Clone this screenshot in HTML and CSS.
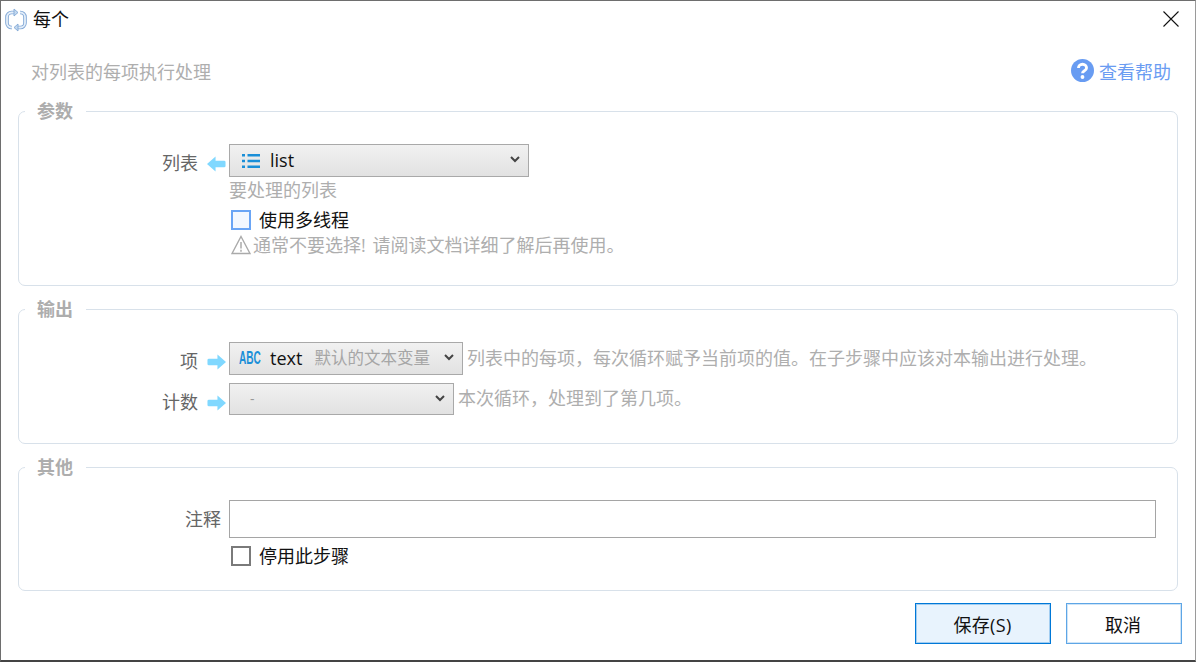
FILE: index.html
```html
<!DOCTYPE html>
<html lang="zh-CN">
<head>
<meta charset="utf-8">
<title>每个</title>
<link rel="stylesheet" href="styles.css">
</head>
<body>
<div class="window">
  <header class="titlebar">
    <svg class="loop-icon" width="24" height="24" viewBox="0 0 24 24" fill="none">
      <path d="M10 4.500H7.500a4.500 4.500 0 0 0-4.500 4.500v6a4.500 4.500 0 0 0 4.500 4.500H8" stroke="#82a8d6" stroke-width="3.600"/>
      <path d="M14 19.500h2.500a4.500 4.500 0 0 0 4.500-4.500V9a4.500 4.500 0 0 0-4.500-4.500H16" stroke="#82a8d6" stroke-width="3.600"/>
      <path d="M10 4.500H7.500a4.500 4.500 0 0 0-4.500 4.500v6a4.500 4.500 0 0 0 4.500 4.500H8" stroke="#e4eef9" stroke-width="1.800"/>
      <path d="M14 19.500h2.500a4.500 4.500 0 0 0 4.500-4.500V9a4.500 4.500 0 0 0-4.500-4.500H16" stroke="#e4eef9" stroke-width="1.800"/>
      <path d="M10 1 14 4.500 10 8Z M14 16 10 19.500 14 23Z" fill="#c4d9ef" stroke="#82a8d6" stroke-width=".9"/>
    </svg>
    <span class="title">每个</span>
    <svg class="close" width="16" height="16" viewBox="0 0 16 16"><path d="M.5.5l15 15M15.500.5l-15 15" stroke="#111" stroke-width="1.100" fill="none"/></svg>
  </header>

  <div class="intro">
    <span class="muted">对列表的每项执行处理</span>
    <a class="help">
      <svg width="23" height="23" viewBox="0 0 24 24"><circle cx="12" cy="12" r="12" fill="#689cf2"/><path d="M7.800 9.500a4.200 4 0 0 1 8.400 0c0 2.800-4.200 2.700-4.200 5.300" fill="none" stroke="#fff" stroke-width="3"/><circle cx="12" cy="18.800" r="2" fill="#fff"/></svg>
      <span>查看帮助</span>
    </a>
  </div>

  <fieldset class="group group-params">
    <legend>参数</legend>
    <div class="row row-list">
      <span class="label">列表</span>
      <svg class="arrow" viewBox="0 0 20 16"><path d="M0 8 9 0v4.500h9a1.500 1.500 0 0 1 1.500 1.500v4a1.500 1.500 0 0 1-1.500 1.500H9V16Z" fill="#80d8ff"/></svg>
      <div class="select select-list">
        <svg class="list-icon" width="18" height="14" viewBox="0 0 18 14"><path d="M0 0h3v2.500H0zM5.500 0H18v2.500H5.500zM0 5.700h3v2.500H0zM5.500 5.700H18v2.500H5.500zM0 11.400h3v2.500H0zM5.500 11.400H18v2.500H5.500z" fill="#1b8fd8"/></svg>
        <span class="value">list</span>
        <svg class="chev" width="10" height="7" viewBox="0 0 10 7"><path d="M1 1l4 4 4-4" fill="none" stroke="#444" stroke-width="2"/></svg>
      </div>
    </div>
    <div class="under muted hint-list">要处理的列表</div>
    <label class="under check-row check-thread"><span class="check check-blue"></span>使用多线程</label>
    <div class="under warn muted">
      <svg width="20" height="20" viewBox="0 0 20 20"><path d="M10 1.500 19 18.500H1Z" fill="none" stroke="#aaa" stroke-width="1.400"/><path d="M10 7v6.500M10 14.800v2" stroke="#aaa" stroke-width="1.500"/></svg>
      <span>通常不要选择! 请阅读文档详细了解后再使用。</span>
    </div>
  </fieldset>

  <fieldset class="group group-output">
    <legend>输出</legend>
    <div class="row row-item">
      <span class="label">项</span>
      <svg class="arrow" viewBox="0 0 20 16"><path d="M20 8 11 0v4.500H2A1.500 1.500 0 0 0 .5 6v4A1.500 1.500 0 0 0 2 11.500h9V16Z" fill="#80d8ff"/></svg>
      <div class="select select-text">
        <span class="abc">ABC</span>
        <span class="value">text</span>
        <span class="sub">默认的文本变量</span>
        <svg class="chev" width="10" height="7" viewBox="0 0 10 7"><path d="M1 1l4 4 4-4" fill="none" stroke="#444" stroke-width="2"/></svg>
      </div>
      <span class="muted side">列表中的每项，每次循环赋予当前项的值。在子步骤中应该对本输出进行处理。</span>
    </div>
    <div class="row row-count">
      <span class="label">计数</span>
      <svg class="arrow" viewBox="0 0 20 16"><path d="M20 8 11 0v4.500H2A1.500 1.500 0 0 0 .5 6v4A1.500 1.500 0 0 0 2 11.500h9V16Z" fill="#80d8ff"/></svg>
      <div class="select select-count">
        <span class="dash">-</span>
        <svg class="chev" width="10" height="7" viewBox="0 0 10 7"><path d="M1 1l4 4 4-4" fill="none" stroke="#444" stroke-width="2"/></svg>
      </div>
      <span class="muted side">本次循环，处理到了第几项。</span>
    </div>
  </fieldset>

  <fieldset class="group group-other">
    <legend>其他</legend>
    <div class="row">
      <span class="label label-wide">注释</span>
      <input class="note" type="text">
    </div>
    <label class="under check-row check-disable"><span class="check"></span>停用此步骤</label>
  </fieldset>

  <footer class="actions">
    <button class="btn btn-primary">保存(S)</button>
    <button class="btn btn-cancel">取消</button>
  </footer>
</div>
</body>
</html>
```

FILE: styles.css
```css
* { box-sizing: border-box; }
html, body { margin: 0; padding: 0; }
body {
  width: 1196px;
  height: 662px;
  overflow: hidden;
  background: #fff;
  font-family: "Open Sans", "Noto Sans CJK SC", sans-serif;
  font-size: 18px;
  color: #111;
}
.window {
  width: 1196px;
  height: 662px;
  border: 1px solid #6e6e6e;
  border-right-color: #9a9a9a;
  border-bottom: 2px solid #444;
  background: #fff;
}
.muted { color: #aeaeae; }

.titlebar {
  display: flex;
  align-items: center;
  height: 37px;
  padding: 0 17px 0 3px;
  line-height: 24px;
}
.loop-icon { flex: none; margin-right: 5px; }
.title { color: #111; margin-top: -2px; }
.close { margin-left: auto; margin-top: -1px; margin-right: -1px; }

.intro {
  display: flex;
  align-items: center;
  justify-content: space-between;
  height: 62px;
  padding: 3px 24px 0 30px;
}
.help {
  display: flex;
  align-items: center;
  gap: 5px;
  color: #6a9cf2;
}

.group {
  margin: 0 17px 12px;
  padding: 22px 0 0;
  min-width: 0;
  border: 1px solid #d8e1ea;
  border-radius: 7px;
}
.group-params { height: 186px; }
.group-output { height: 146px; }
.group-other { height: 135px; }
.group legend {
  margin-left: 6px;
  padding: 0 13px 0 12px;
  font-weight: 700;
  line-height: 22px;
  font-size: 18px;
  color: #adadad;
}

.row {
  display: grid;
  grid-template-columns: 179px 31px max-content 1fr;
  align-items: center;
}
.label {
  text-align: right;
  color: #666;
  line-height: 33px;
}
.label-wide {
  grid-column: 1 / 3;
  padding-right: 8px;
}
.arrow {
  justify-self: end;
  width: 19px;
  height: 16px;
  margin-right: 3px;
}
.row-list .label, .row-list .arrow { position: relative; top: 3px; }
.row-item .label, .row-item .arrow { position: relative; top: 3px; }
.row-count .label, .row-count .arrow { position: relative; top: 4px; }

.select {
  display: flex;
  align-items: center;
  height: 33px;
  border: 1px solid #a9a9a9;
  background: linear-gradient(#f1f1f1, #e2e2e2);
  position: relative;
  line-height: 24px;
}
.select-list { width: 300px; padding-left: 11px; }
.select-text { width: 234px; padding-left: 9px; }
.select-count { width: 225px; padding-left: 20px; }
.list-icon { margin-right: 10px; margin-left: 1px; }
.value { color: #111; margin-top: -2px; }
.abc {
  display: inline-block;
  width: 22px;
  margin-right: 9px;
  margin-top: -1px;
  font-family: "Liberation Sans", sans-serif;
  font-size: 18px;
  font-weight: 700;
  color: #1b8fd8;
  transform: scaleX(.56);
  transform-origin: left center;
  white-space: nowrap;
}
.sub { margin-left: 12px; margin-top: -2px; color: #a6a6a6; font-size: 16.500px; }
.dash { color: #999; font-size: 14px; }
.chev { position: absolute; right: 8px; top: 11px; }
.side { margin-left: 4px; margin-top: -3px; white-space: nowrap; }

.row-item { height: 33px; }
.row-count { height: 32px; margin-top: 7px; }
.row-count .select { height: 32px; }

.under { margin-left: 210px; }
.hint-list { line-height: 26px; }
.check-row {
  display: flex;
  align-items: center;
  line-height: 24px;
}
.check-thread { margin-top: 5px; }
.check {
  width: 20px;
  height: 20px;
  margin: 0 8px 0 2px;
  border: 2px solid #7a7a7a;
  background: #fff;
}
.check-blue { border-color: #6aa5f5; background: #f3f8ff; }
.warn {
  display: flex;
  align-items: center;
  gap: 2px;
  margin-top: 0;
  padding-left: 2px;
  line-height: 26px;
  word-spacing: 2px;
}

.note {
  grid-column: 3 / 5;
  width: 927px;
  height: 38px;
  border: 1px solid #a5a5a5;
  background: #fff;
  outline: none;
}
.check-disable { margin-top: 6px; }

.actions {
  display: flex;
  justify-content: flex-end;
  gap: 15px;
  padding-right: 13px;
  margin-top: 1px;
}
.btn {
  height: 41px;
  font: inherit;
  color: #111;
  background: #fff;
  padding: 0;
}
.btn-primary {
  width: 136px;
  border: 1px solid #0078d7;
  box-shadow: inset 0 0 0 1px rgba(0, 120, 215, .3);
  background: #e8f3fd;
  padding-right: 1px;
  letter-spacing: .3px;
}
.btn-cancel {
  width: 116px;
  border: 1px solid #5ea6e6;
  box-shadow: inset 0 0 0 1px rgba(94, 166, 230, .3);
  padding-right: 2px;
}
```
